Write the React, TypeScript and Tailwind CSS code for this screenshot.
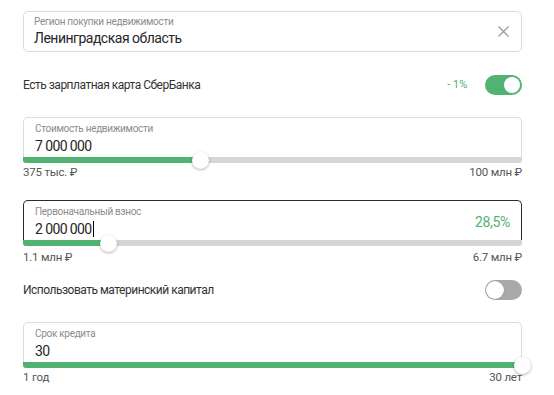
import React from 'react';

const GREEN = 'bg-[#52b272]';

interface ToggleProps {
  on: boolean;
}

const Toggle: React.FC<ToggleProps> = ({ on }) => (
  <div
    className={
      on
        ? 'relative h-[20px] w-[37px] rounded-full bg-[#52b272]'
        : 'relative h-[20px] w-[37px] rounded-full bg-[#a9a9a9]'
    }
  >
    <div
      className={
        on
          ? 'absolute right-[2px] top-[2px] h-[16px] w-[16px] rounded-full bg-white'
          : 'absolute left-[1px] top-[1px] h-[18px] w-[18px] rounded-full bg-white shadow-[0_0_1px_rgba(0,0,0,0.4)]'
      }
    />
  </div>
);

interface SliderFieldProps {
  label: string;
  value: React.ReactNode;
  percent: number;
  min: string;
  max: string;
  focused?: boolean;
  right?: React.ReactNode;
  labelsGap?: string;
}

const SliderField: React.FC<SliderFieldProps> = ({
  label,
  value,
  percent,
  min,
  max,
  focused,
  right,
  labelsGap = 'mt-[2px]'
}) => (
  <div>
    <div
      className={
        focused
          ? 'rounded-t-[5px] border border-b-0 border-[#2b2b2b] px-[11px] pt-[4px]'
          : 'rounded-t-[5px] border border-b-0 border-[#dcdcdc] px-[11px] pt-[4px]'
      }
    >
      <div className="flex items-center">
        <div className="flex-1">
          <div className="text-[10px] leading-[13px] tracking-[-0.3px] text-[#8c8c8c]">{label}</div>
          <div className="text-[14px] leading-[22px] tracking-[-0.6px] text-[#262626]">{value}</div>
        </div>
        {right}
      </div>
    </div>
    <div className="relative h-[6px] rounded-b-[3px] bg-[#d6d6d6]">
      <div className={`h-full rounded-bl-[3px] ${GREEN}`} style={{ width: `${percent}%` }} />
      <div
        className="absolute top-[-5px] ml-[-8px] h-[17px] w-[17px] rounded-full bg-white shadow-[0_1px_3px_rgba(0,0,0,0.3)]"
        style={{ left: `${percent}%` }}
      />
    </div>
    <div
      className={`${labelsGap} flex justify-between text-[11.5px] leading-[14px] tracking-[-0.2px] text-[#555555]`}
    >
      <span>{min}</span>
      <span>{max}</span>
    </div>
  </div>
);

const ToggleRow: React.FC<{ text: string; on: boolean; extra?: string }> = ({ text, on, extra }) => (
  <div className="flex h-[20px] items-center">
    <span className="flex-1 text-[12px] tracking-[-0.5px] text-[#333333]">{text}</span>
    {extra && <span className="mr-[18px] text-[11.5px] tracking-[-0.3px] text-[#52b272]">{extra}</span>}
    <Toggle on={on} />
  </div>
);

export default function App() {
  return (
    <div
      className="min-h-[395px] bg-white pl-[23px] pr-[32px] pt-[11px]"
      style={{ fontFamily: 'Roboto, "Liberation Sans", sans-serif' }}
    >
      <div className="flex h-[41px] items-center rounded-[5px] border border-[#dcdcdc] pl-[10px] pr-[11px]">
        <div className="flex-1">
          <div className="text-[10px] leading-[13px] tracking-[-0.3px] text-[#8c8c8c]">
            Регион покупки недвижимости
          </div>
          <div className="text-[14px] leading-[20px] tracking-[-0.5px] text-[#262626]">Ленинградская область</div>
        </div>
        <svg width="11" height="11" viewBox="0 0 11 11" className="mr-[1px]">
          <path d="M0.5 0.5 L10.5 10.5 M10.5 0.5 L0.5 10.5" stroke="#9a9a9a" strokeWidth="1.3" />
        </svg>
      </div>

      <div className="mt-[23px]">
        <ToggleRow text="Есть зарплатная карта СберБанка" on extra="- 1%" />
      </div>

      <div className="mt-[22px]">
        <SliderField label="Стоимость недвижимости" value="7 000 000" percent={35.4} min="375 тыс. ₽" max="100 млн ₽" />
      </div>

      <div className="mt-[21px]">
        <SliderField
          label="Первоначальный взнос"
          value={
            <span className="inline-flex items-center">
              2 000 000
              <span className="ml-px inline-block h-[16px] w-px bg-black" />
            </span>
          }
          percent={17}
          min="1.1 млн ₽"
          max="6.7 млн ₽"
          focused
          labelsGap="mt-[4px]"
          right={<span className="text-[14px] tracking-[-0.3px] text-[#52b272]">28,5%</span>}
        />
      </div>

      <div className="mt-[16px]">
        <ToggleRow text="Использовать материнский капитал" on={false} />
      </div>

      <div className="mt-[22px]">
        <SliderField label="Срок кредита" value="30" percent={100} min="1 год" max="30 лет" />
      </div>
    </div>
  );
}
